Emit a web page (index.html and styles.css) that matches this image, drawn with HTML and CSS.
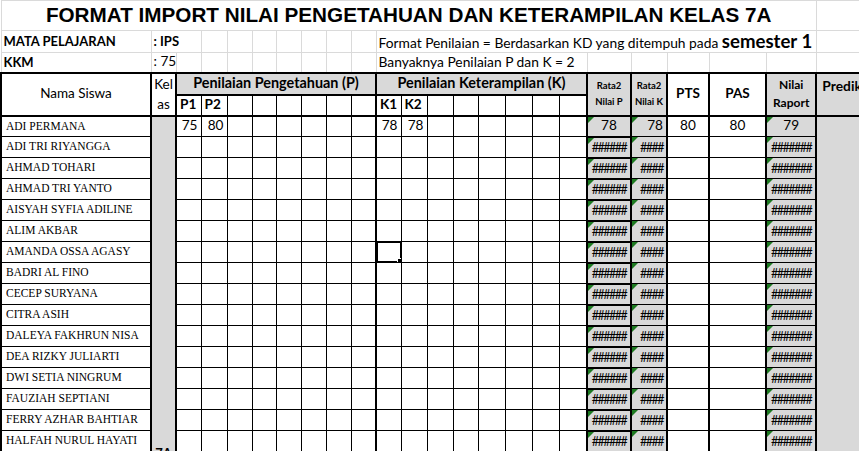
FILE: index.html
```html
<!DOCTYPE html>
<html lang="id">
<head>
<meta charset="utf-8">
<title>Format Import Nilai</title>
<link rel="stylesheet" href="styles.css">
</head>
<body>
<table class="sheet">
<colgroup>
<col class="w-nm"><col class="w-kl">
<col class="w25"><col class="w26"><col class="w25"><col class="w24"><col class="w25"><col class="w25"><col class="w25"><col class="w25">
<col class="w25"><col class="w26"><col class="w26"><col class="w25"><col class="w27"><col class="w27"><col class="w27"><col class="w28">
<col class="w-rp"><col class="w-rk"><col class="w-pts"><col class="w-pas"><col class="w-rr"><col class="w-pd">
</colgroup>
<tbody>
<tr class="r-title"><td class="g title" colspan="23">FORMAT IMPORT NILAI PENGETAHUAN DAN KETERAMPILAN KELAS 7A</td><td class="g"></td></tr>
<tr class="r-info1"><td class="g lbl">MATA PELAJARAN</td><td class="g val strong" colspan="2">: IPS</td><td class="g"></td><td class="g"></td><td class="g"></td><td class="g"></td><td class="g"></td><td class="g"></td><td class="g"></td><td class="g note" colspan="13">Format Penilaian = Berdasarkan KD yang ditempuh pada <b class="sem">semester 1</b></td><td class="g"></td></tr>
<tr class="r-info2"><td class="g lbl">KKM</td><td class="g val">: 75</td><td class="g"></td><td class="g"></td><td class="g"></td><td class="g"></td><td class="g"></td><td class="g"></td><td class="g"></td><td class="g"></td><td class="g note" colspan="8">Banyaknya Penilaian P dan K = 2</td><td class="g"></td><td class="g"></td><td class="g"></td><td class="g"></td><td class="g"></td><td class="g"></td></tr>
<tr class="r-h1">
<td class="h hname" rowspan="2">Nama Siswa</td>
<td class="h hkel" rowspan="2">Kel<br>as</td>
<td class="h hgrp" colspan="8">Penilaian Pengetahuan (P)</td>
<td class="h hgrp" colspan="8">Penilaian Keterampilan (K)</td>
<td class="h hrata" rowspan="2">Rata2<br>Nilai P</td>
<td class="h hrata" rowspan="2">Rata2<br>Nilai K</td>
<td class="h hbig" rowspan="2">PTS</td>
<td class="h hbig" rowspan="2">PAS</td>
<td class="h hraport" rowspan="2">Nilai<br>Raport</td>
<td class="h hpred" rowspan="2">Predikat</td>
</tr>
<tr class="r-h2">
<td class="h hp first">P1</td><td class="h hp">P2</td><td class="h hp"></td><td class="h hp"></td><td class="h hp"></td><td class="h hp"></td><td class="h hp"></td><td class="h hp e"></td>
<td class="h hp first">K1</td><td class="h hp">K2</td><td class="h hp"></td><td class="h hp"></td><td class="h hp"></td><td class="h hp"></td><td class="h hp"></td><td class="h hp e"></td>
</tr>
<tr class="r"><td class="nm">ADI PERMANA</td><td class="kl" rowspan="17">7A</td><td class="n">75</td><td class="n">80</td><td></td><td></td><td></td><td></td><td></td><td class="e"></td><td class="n">78</td><td class="n">78</td><td></td><td></td><td></td><td></td><td></td><td class="e"></td><td class="rp tri c">78</td><td class="rk tri n">78</td><td class="pts c">80</td><td class="pas c">80</td><td class="rr tri c">79</td><td class="pd"></td></tr>
<tr class="r"><td class="nm">ADI TRI RIYANGGA</td><td></td><td></td><td></td><td></td><td></td><td></td><td></td><td class="e"></td><td></td><td></td><td></td><td></td><td></td><td></td><td></td><td class="e"></td><td class="rp tri hs">######</td><td class="rk tri hs">####</td><td class="pts"></td><td class="pas"></td><td class="rr tri hs">#######</td><td class="pd"></td></tr>
<tr class="r"><td class="nm">AHMAD TOHARI</td><td></td><td></td><td></td><td></td><td></td><td></td><td></td><td class="e"></td><td></td><td></td><td></td><td></td><td></td><td></td><td></td><td class="e"></td><td class="rp tri hs">######</td><td class="rk tri hs">####</td><td class="pts"></td><td class="pas"></td><td class="rr tri hs">#######</td><td class="pd"></td></tr>
<tr class="r"><td class="nm">AHMAD TRI YANTO</td><td></td><td></td><td></td><td></td><td></td><td></td><td></td><td class="e"></td><td></td><td></td><td></td><td></td><td></td><td></td><td></td><td class="e"></td><td class="rp tri hs">######</td><td class="rk tri hs">####</td><td class="pts"></td><td class="pas"></td><td class="rr tri hs">#######</td><td class="pd"></td></tr>
<tr class="r"><td class="nm">AISYAH SYFIA ADILINE</td><td></td><td></td><td></td><td></td><td></td><td></td><td></td><td class="e"></td><td></td><td></td><td></td><td></td><td></td><td></td><td></td><td class="e"></td><td class="rp tri hs">######</td><td class="rk tri hs">####</td><td class="pts"></td><td class="pas"></td><td class="rr tri hs">#######</td><td class="pd"></td></tr>
<tr class="r"><td class="nm">ALIM AKBAR</td><td></td><td></td><td></td><td></td><td></td><td></td><td></td><td class="e"></td><td></td><td></td><td></td><td></td><td></td><td></td><td></td><td class="e"></td><td class="rp tri hs">######</td><td class="rk tri hs">####</td><td class="pts"></td><td class="pas"></td><td class="rr tri hs">#######</td><td class="pd"></td></tr>
<tr class="r"><td class="nm">AMANDA OSSA AGASY</td><td></td><td></td><td></td><td></td><td></td><td></td><td></td><td class="e"></td><td class="sel"></td><td></td><td></td><td></td><td></td><td></td><td></td><td class="e"></td><td class="rp tri hs">######</td><td class="rk tri hs">####</td><td class="pts"></td><td class="pas"></td><td class="rr tri hs">#######</td><td class="pd"></td></tr>
<tr class="r"><td class="nm">BADRI AL FINO</td><td></td><td></td><td></td><td></td><td></td><td></td><td></td><td class="e"></td><td></td><td></td><td></td><td></td><td></td><td></td><td></td><td class="e"></td><td class="rp tri hs">######</td><td class="rk tri hs">####</td><td class="pts"></td><td class="pas"></td><td class="rr tri hs">#######</td><td class="pd"></td></tr>
<tr class="r"><td class="nm">CECEP SURYANA</td><td></td><td></td><td></td><td></td><td></td><td></td><td></td><td class="e"></td><td></td><td></td><td></td><td></td><td></td><td></td><td></td><td class="e"></td><td class="rp tri hs">######</td><td class="rk tri hs">####</td><td class="pts"></td><td class="pas"></td><td class="rr tri hs">#######</td><td class="pd"></td></tr>
<tr class="r"><td class="nm">CITRA ASIH</td><td></td><td></td><td></td><td></td><td></td><td></td><td></td><td class="e"></td><td></td><td></td><td></td><td></td><td></td><td></td><td></td><td class="e"></td><td class="rp tri hs">######</td><td class="rk tri hs">####</td><td class="pts"></td><td class="pas"></td><td class="rr tri hs">#######</td><td class="pd"></td></tr>
<tr class="r"><td class="nm">DALEYA FAKHRUN NISA</td><td></td><td></td><td></td><td></td><td></td><td></td><td></td><td class="e"></td><td></td><td></td><td></td><td></td><td></td><td></td><td></td><td class="e"></td><td class="rp tri hs">######</td><td class="rk tri hs">####</td><td class="pts"></td><td class="pas"></td><td class="rr tri hs">#######</td><td class="pd"></td></tr>
<tr class="r"><td class="nm">DEA RIZKY JULIARTI</td><td></td><td></td><td></td><td></td><td></td><td></td><td></td><td class="e"></td><td></td><td></td><td></td><td></td><td></td><td></td><td></td><td class="e"></td><td class="rp tri hs">######</td><td class="rk tri hs">####</td><td class="pts"></td><td class="pas"></td><td class="rr tri hs">#######</td><td class="pd"></td></tr>
<tr class="r"><td class="nm">DWI SETIA NINGRUM</td><td></td><td></td><td></td><td></td><td></td><td></td><td></td><td class="e"></td><td></td><td></td><td></td><td></td><td></td><td></td><td></td><td class="e"></td><td class="rp tri hs">######</td><td class="rk tri hs">####</td><td class="pts"></td><td class="pas"></td><td class="rr tri hs">#######</td><td class="pd"></td></tr>
<tr class="r"><td class="nm">FAUZIAH SEPTIANI</td><td></td><td></td><td></td><td></td><td></td><td></td><td></td><td class="e"></td><td></td><td></td><td></td><td></td><td></td><td></td><td></td><td class="e"></td><td class="rp tri hs">######</td><td class="rk tri hs">####</td><td class="pts"></td><td class="pas"></td><td class="rr tri hs">#######</td><td class="pd"></td></tr>
<tr class="r"><td class="nm">FERRY AZHAR BAHTIAR</td><td></td><td></td><td></td><td></td><td></td><td></td><td></td><td class="e"></td><td></td><td></td><td></td><td></td><td></td><td></td><td></td><td class="e"></td><td class="rp tri hs">######</td><td class="rk tri hs">####</td><td class="pts"></td><td class="pas"></td><td class="rr tri hs">#######</td><td class="pd"></td></tr>
<tr class="r"><td class="nm">HALFAH NURUL HAYATI</td><td></td><td></td><td></td><td></td><td></td><td></td><td></td><td class="e"></td><td></td><td></td><td></td><td></td><td></td><td></td><td></td><td class="e"></td><td class="rp tri hs">######</td><td class="rk tri hs">####</td><td class="pts"></td><td class="pas"></td><td class="rr tri hs">#######</td><td class="pd"></td></tr>
<tr class="r"><td class="nm"></td><td></td><td></td><td></td><td></td><td></td><td></td><td></td><td class="e"></td><td></td><td></td><td></td><td></td><td></td><td></td><td></td><td class="e"></td><td class="rp tri hs">######</td><td class="rk tri hs">####</td><td class="pts"></td><td class="pas"></td><td class="rr tri hs">#######</td><td class="pd"></td></tr>
</tbody>
</table>
</body>
</html>
```

FILE: styles.css
```css
* { box-sizing: border-box; }
html, body { margin: 0; padding: 0; background: #fff; overflow: hidden; }
body {
  width: 859px;
  height: 451px;
  font-family: Lato, "Open Sans", sans-serif;
  font-size: 13.6px;
  color: #000;
}

.sheet {
  border-collapse: collapse;
  table-layout: fixed;
  width: 876px;
}

.w-nm { width: 150px; }
.w-kl { width: 25px; }
.w24 { width: 24px; }
.w25 { width: 25px; }
.w26 { width: 26px; }
.w27 { width: 27px; }
.w28 { width: 28px; }
.w-rp { width: 44px; }
.w-rk { width: 36px; }
.w-pts { width: 42px; }
.w-pas { width: 57px; }
.w-rr { width: 50px; }
.w-pd { width: 60px; }

.sheet td {
  padding: 0 2px;
  border: 1px solid #000;
  white-space: nowrap;
  overflow: hidden;
  line-height: 1;
  vertical-align: middle;
}

/* top rows with light gridlines */
.r-title { height: 30px; }
.r-info1 { height: 22px; }
.r-info2 { height: 20px; }
.sheet td.g { border: 1px solid #dadada; }
.title {
  font-family: "Liberation Sans", Arial, sans-serif;
  font-weight: bold;
  font-size: 20.7px;
  text-align: center;
  padding-bottom: 2px;
}
.lbl { font-weight: bold; padding-left: 4px; font-size: 13px; }
.val { padding-left: 3px; }
.strong { font-weight: bold; font-size: 13px; }
.note { padding-left: 3px; font-size: 13.8px; }
.sem { font-size: 18.6px; }

/* header */
.r-h1 { height: 22px; }
.r-h2 { height: 21px; }
.sheet td.h { border: 2px solid #000; text-align: center; }
.hname { font-size: 13.5px; }
.hkel { line-height: 20px !important; padding: 0 !important; font-size: 13.5px; }
.hgrp { background: #d9d9d9; font-weight: bold; font-size: 14.4px; }
.hrata { background: #d9d9d9; font-weight: bold; font-size: 9.5px; line-height: 16px !important; }
.hbig { font-weight: bold; font-size: 13.5px; }
.hraport { background: #d9d9d9; font-weight: bold; font-size: 12px; line-height: 18px !important; }
.hpred {
  background: #d9d9d9;
  font-weight: bold;
  font-size: 13.8px;
  vertical-align: top !important;
  text-align: left !important;
  padding: 5px 0 0 5px !important;
}
.sheet td.hp {
  border-width: 1px;
  border-top: 2px solid #000;
  border-bottom: 2px solid #000;
  text-align: left;
  font-weight: bold;
  padding-left: 3px;
}
.sheet td.hp.e { border-right: 2px solid #000; }
.sheet td.hp.first { border-left: 2px solid #000; }

/* data */
.r { height: 21px; }
.sheet td.nm {
  font-family: "Liberation Serif", "Times New Roman", serif;
  font-size: 11.5px;
  padding-left: 4px;
  border-left: 2px solid #000;
  border-right: 2px solid #000;
}
.sheet td.kl {
  background: #d9d9d9;
  border: 2px solid #000;
  vertical-align: bottom;
  text-align: center;
  font-weight: bold;
  font-size: 13px;
  padding: 0 0 12px;
}
.sheet td.e { border-right: 2px solid #000; }
.n { text-align: right; padding-right: 3px !important; }
.c { text-align: center; }

.sheet td.rp { background: #d9d9d9; border: 2px solid #000; text-align: center; }
.sheet td.rk { background: #d9d9d9; border-right: 2px solid #000; }
.sheet td.pts { border-right: 2px solid #000; }
.sheet td.pas { border-right: 2px solid #000; }
.sheet td.rr { background: #d9d9d9; border-left: 2px solid #000; border-right: 2px solid #000; text-align: center; }
.sheet td.pd { background: #d9d9d9; border-top: none; border-bottom: none; border-right: none; }

.sheet td.hs {
  font-size: 12.5px;
  letter-spacing: -1.5px;
  text-align: center;
  padding: 2px 0 0;
}
.sheet td.rk.hs { text-align: right; padding-right: 3px; }

.tri { position: relative; }
.tri::before {
  content: "";
  position: absolute;
  left: 0;
  top: 0;
  border-top: 6px solid #1d7a21;
  border-right: 6px solid transparent;
}

.sel { position: relative; }
.sel::after {
  content: "";
  position: absolute;
  left: -1px;
  top: -1px;
  right: -1px;
  bottom: -1px;
  border: 2px solid #000;
  box-shadow: inset 0 0 0 1px #fff;
}
.sel::before {
  content: "";
  position: absolute;
  right: -4px;
  bottom: -4px;
  width: 6px;
  height: 6px;
  background: #000;
  border: 1px solid #fff;
  z-index: 1;
}
```
